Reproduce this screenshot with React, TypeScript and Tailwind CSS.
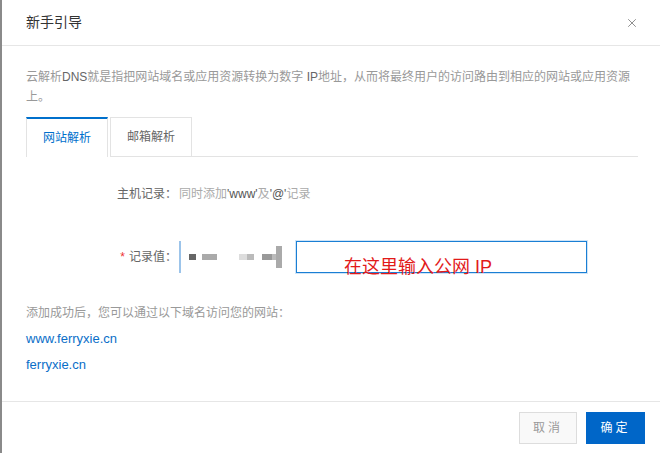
import { X } from "lucide-react";

const font = {
  fontFamily: '"Liberation Sans", "Noto Sans CJK SC", sans-serif',
};

export default function App() {
  return (
    <div className="flex h-[453px] w-[660px] bg-white text-[#333]" style={font}>
      {/* window edge */}
      <div className="w-[2px] bg-[#8a8a8a]" />

      <div className="flex flex-1 flex-col">
        {/* header */}
        <div className="flex h-[46px] items-center justify-between border-b border-[#e6e6e6] pl-[24px] pr-[21px]">
          <span className="text-[14px] text-[#333]">新手引导</span>
          <X className="h-[14px] w-[14px] text-[#888]" strokeWidth={1.6} />
        </div>

        {/* body */}
        <div className="flex flex-1 flex-col pl-[24px] pr-[20px] pt-[21px]">
          <p className="pr-[2px] text-[12px] leading-[20px] text-[#999]">
            云解析<span className="text-[#666]">DNS</span>就是指把网站域名或应用资源转换为数字 <span className="text-[#666]">IP</span>地址，从而将最终用户的访问路由到相应的网站或应用资源上。
          </p>

          {/* tabs */}
          <div className="mt-[10px] flex h-[40px] items-stretch">
            <div className="flex w-[82px] items-center justify-center border-x border-t-2 border-x-[#e3e3e3] border-t-[#0070cc] text-[12px] text-[#0070cc]">
              网站解析
            </div>
            <div className="ml-[2px] flex w-[82px] items-center justify-center border border-[#e3e3e3] text-[12px] text-[#666]">
              邮箱解析
            </div>
            <div className="mr-[2px] flex-1 border-b border-[#e3e3e3]" />
          </div>

          {/* form */}
          <div className="mt-[26px] flex h-[22px] items-center text-[12px]">
            <span className="w-[153px] pr-[2px] text-right text-[#666]">主机记录：</span>
            <span className="text-[#aaa]">
              同时添加<span className="text-[#555]">'www'</span>及<span className="text-[#555]">'@'</span>记录
            </span>
          </div>

          <div className="mt-[36px] flex h-[32px] items-center text-[12px]">
            <span className="w-[153px] pr-[2px] text-right text-[#666]">
              <span className="mr-[4px] text-[#e33]">*</span>记录值：
            </span>
            <div className="flex h-[32px] w-[117px] items-center border-l-2 border-[#9cc4ea] pl-[8px]">
              <span className="h-[6px] w-[7px] bg-[#666]" />
              <span className="ml-[6px] h-[6px] w-[15px] bg-[#aaa]" />
              <span className="ml-[22px] h-[6px] w-[8px] bg-[#ddd]" />
              <span className="h-[6px] w-[7px] bg-[#bbb]" />
              <span className="ml-[8px] h-[6px] w-[10px] bg-[#999]" />
              <span className="h-[6px] w-[4px] bg-[#bbb]" />
              <span className="h-[22px] w-[6px] bg-[#aaa]" />
            </div>
            <div className="relative h-[32px] w-[291px] border border-[#1a7fd4] shadow-[0_0_0_1px_#cfe4f7]">
              <span className="absolute left-[47px] top-[14px] whitespace-nowrap text-[18px] leading-[22px] text-[#e21a1a]">
                在这里输入公网 IP
              </span>
            </div>
          </div>

          <p className="mt-[30px] text-[12px] leading-[20px] text-[#999]">
            添加成功后，您可以通过以下域名访问您的网站：
          </p>
          <a className="mt-[6px] text-[13px] leading-[20px] text-[#0a6ec8]">www.ferryxie.cn</a>
          <a className="mt-[6px] text-[13px] leading-[20px] text-[#0a6ec8]">ferryxie.cn</a>
        </div>

        {/* footer */}
        <div className="flex h-[52px] items-center justify-end gap-[9px] border-t border-[#e6e6e6] pr-[15px]">
          <button className="h-[32px] w-[58px] border border-[#ddd] bg-[#f9f9f9] text-[12px] tracking-[3px] text-[#999]">
            取消
          </button>
          <button className="h-[32px] w-[59px] bg-[#0066c8] text-[12px] tracking-[3px] text-white">
            确定
          </button>
        </div>
      </div>
    </div>
  );
}
